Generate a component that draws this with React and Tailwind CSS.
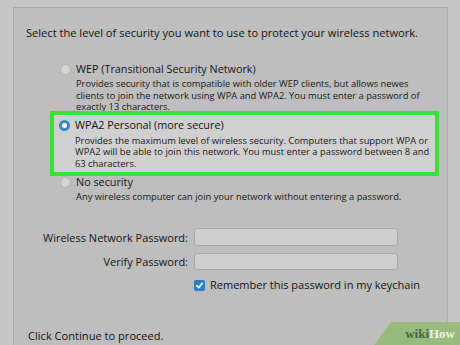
import React from "react";

function Radio({ selected }) {
  if (selected) {
    return (
      <span className="w-[11px] h-[11px] rounded-full border-[3px] border-[#3b86c6] bg-[#f4f4f4] shrink-0" />
    );
  }
  return (
    <span className="w-[11px] h-[11px] rounded-full border border-[#b3b3b3] bg-[#d4d4d4] shrink-0" />
  );
}

function Option({ title, selected, lines }) {
  return (
    <div>
      <div className="flex items-center gap-[5px] h-[16px]">
        <Radio selected={selected} />
        <span className="text-[10.8px] text-[#141414] whitespace-nowrap">{title}</span>
      </div>
      <div className="pl-[16px] mt-[1px] text-[9.35px] leading-[11.5px] text-[#181818] whitespace-nowrap">
        {lines.map((l) => (
          <p key={l}>{l}</p>
        ))}
      </div>
    </div>
  );
}

export default function App() {
  return (
    <div
      className="w-[460px] h-[345px] overflow-hidden relative bg-[#c6c6c6] pt-[7px] pl-[13px] pr-[12px]"
      style={{ fontFamily: "'Open Sans', 'Noto Sans', sans-serif" }}
    >
      <div className="h-[360px] border border-[#a9a9a9] bg-[#bebebe] pt-[17px] pl-[12px]">
        <p className="text-[11.1px] leading-[16px] text-[#121212] whitespace-nowrap">
          Select the level of security you want to use to protect your wireless network.
        </p>

        <div className="pl-[34px] mt-[20px]">
          <Option
            title="WEP (Transitional Security Network)"
            lines={[
              "Provides security that is compatible with older WEP clients, but allows newes",
              "clients to join the network using WPA and WPA2. You must enter a password of",
              "exactly 13 characters.",
            ]}
          />
        </div>

        <div className="relative z-10 ml-[24px] mr-[8px] mt-[-2px] border-[4px] border-[#3be236] bg-[#d0d0d0] pl-[5px] pt-[3px] pb-[3px]">
          <Option
            title="WPA2 Personal (more secure)"
            selected
            lines={[
              "Provides the maximum level of wireless security. Computers that support WPA or",
              "WPA2 will be able to join this network. You must enter a password between 8 and",
              "63 characters.",
            ]}
          />
        </div>

        <div className="pl-[34px] mt-[-2px]">
          <Option
            title="No security"
            lines={["Any wireless computer can join your network without entering a password."]}
          />
        </div>

        <div className="mt-[25px] grid grid-cols-[162px_204px] gap-x-[6px] gap-y-[6px] items-center text-[11px] text-[#141414]">
          <span className="text-right whitespace-nowrap pt-[2px]">Wireless Network Password:</span>
          <div className="h-[18px] rounded-[3px] border border-[#a8a8a8] bg-[#cecece]" />
          <span className="text-right whitespace-nowrap pt-[2px]">Verify Password:</span>
          <div className="h-[17px] rounded-[3px] border border-[#a8a8a8] bg-[#cecece]" />
          <span />
          <div className="flex items-center gap-[5px] h-[18px] whitespace-nowrap">
            <span className="w-[11px] h-[11px] rounded-[2px] bg-[#2f7dc2] flex items-center justify-center shrink-0">
              <svg viewBox="0 0 10 10" className="w-[9px] h-[9px]">
                <path d="M2 5.2 L4.2 7.4 L8 2.6" fill="none" stroke="#fff" strokeWidth="1.8" strokeLinecap="round" strokeLinejoin="round" />
              </svg>
            </span>
            <span>Remember this password in my keychain</span>
          </div>
        </div>

        <p className="mt-[33px] pl-[2px] text-[11.1px] leading-[16px] text-[#121212] whitespace-nowrap">
          Click Continue to proceed.
        </p>
      </div>

      <div className="absolute right-0 bottom-0 w-[86px] h-[23px] bg-[#98ba7c] flex items-center justify-end pr-[5px] [clip-path:polygon(20%_0,100%_0,100%_100%,0_100%)]">
        <span className="text-[13px] font-bold" style={{ fontFamily: "'Liberation Serif', serif" }}>
          <span className="text-[#48683a]">wiki</span>
          <span className="text-[#eef4e6]">How</span>
        </span>
      </div>
    </div>
  );
}
